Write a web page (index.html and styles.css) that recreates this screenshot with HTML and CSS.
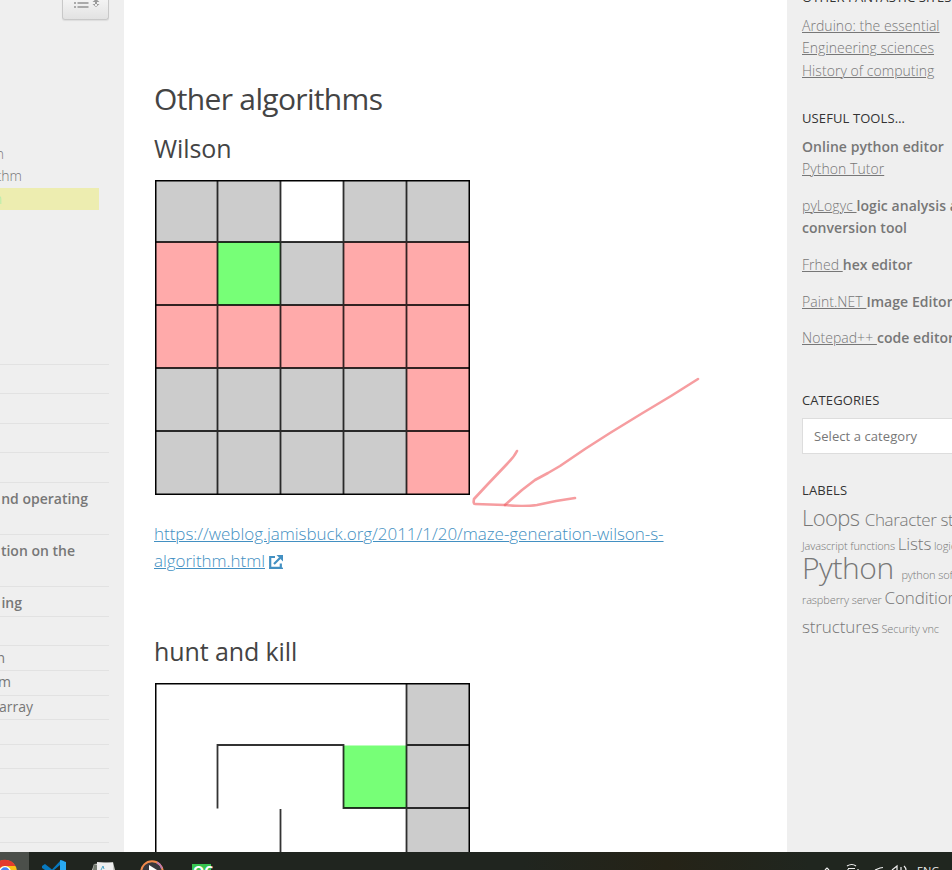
FILE: index.html
```html
<!DOCTYPE html>
<html lang="en">
<head>
<meta charset="utf-8">
<title>Other algorithms</title>
<link rel="stylesheet" href="styles.css">
</head>
<body>
<div class="page">
  <aside class="nav">
    <button class="toggle" aria-label="Toggle list">
      <svg width="46" height="21" viewBox="0 0 46 21"><path d="M11 4h2M11 8h2M14.500 4h11M14.500 8h11" stroke="#aaa" stroke-width="2"/><path d="M33 0l3.500 3h-7zM33 8l3.500-3h-7zM32 0h2v7h-2z" fill="#999"/></svg>
    </button>
    <ul class="toc">
      <li class="toc-a">n</li>
      <li class="toc-b">thm</li>
      <li class="toc-active">n</li>
    </ul>
    <ul class="menu">
      <li class="h29"></li>
      <li class="h30"></li>
      <li class="h29"></li>
      <li class="h30"></li>
      <li class="h52 strong"><span class="w88">nd operating</span></li>
      <li class="h52 strong"><span class="w75">tion on the</span></li>
      <li class="h30 strong"><span class="w22">ing</span></li>
      <li class="h29"></li>
      <li class="h25"><span class="w4">n</span></li>
      <li class="h25 snug"><span class="w11">m</span></li>
      <li class="h24 snug"><span class="w33">array</span></li>
      <li class="h25"></li>
      <li class="h24"></li>
      <li class="h25"></li>
      <li class="h24"></li>
      <li class="h25"></li>
    </ul>
  </aside>

  <main class="content">
    <h2>Other algorithms</h2>
    <h3>Wilson</h3>
    <div class="figure">
      <svg class="maze" width="315" height="315" viewBox="0 0 315 315">
        <path fill="#ccc" d="M0 0h315v315H0z"/>
        <path fill="#fff" d="M125.500 0h63v62h-63z"/>
        <path fill="#faa" d="M0 62h62.500v63H0zM188.500 62H315v253h-63.500v-127H0v-63h188.500z"/>
        <path fill="#7f7" d="M62.500 62h63v63h-63z"/>
        <path class="wall" d="M62.500 0v315M125.500 0v315M188.500 0v315M251.500 0v315M0 62h315M0 125h315M0 188h315M0 251h315"/>
        <path class="frame" d="M.75.75h313.500v313.500H.75z"/>
      </svg>
      <svg class="arrow" width="240" height="140" viewBox="0 0 240 140">
        <path d="M233 12L206 29L176 47L145 66L120 82L95 99L83 106L70 113L57 123L40 138"/>
        <path d="M52 84Q49 90 42 97L22 118L9 132Q8 137 10 137L40 138Q58 140 72 138L91 134L110 131"/>
      </svg>
    </div>
    <p class="source"><a>https://weblog.jamisbuck.org/2011/1/20/maze-generation-wilson-s-<br>algorithm.html</a> <svg class="ext" width="14" height="14" viewBox="0 0 14 14"><path d="M6 2H1.200v10.800h10.600V8.500M5 9l6-6" fill="none" stroke="#4390c2" stroke-width="2.200"/><path d="M7.500 0H14v6.500z" fill="#4390c2"/><path d="M0 13.300h14" stroke="#4390c2" stroke-width="1.400"/></svg></p>
    <h3>hunt and kill</h3>
    <div class="figure">
      <svg class="maze" width="315" height="315" viewBox="0 0 315 315">
        <path fill="#fff" d="M0 0h315v315H0z"/>
        <path fill="#ccc" d="M251.500 0H315v315h-63.500z"/>
        <path fill="#7f7" d="M188.500 62.500h63v62.500h-63z"/>
        <path class="wall" d="M251.500 0v315M251.500 62H315M251.500 125H315M62.500 125.500V62h126v63h63M125.500 126v189"/>
        <path class="frame" d="M.75.75h313.500v313.500H.75z"/>
      </svg>
    </div>
  </main>

  <aside class="side">
    <h4>Other fantastic sites</h4>
    <p class="links"><a>Arduino: the essential</a><br><a>Engineering sciences</a><br><a>History of computing</a></p>
    <h4 class="tools">Useful tools…</h4>
    <p>Online python editor<br><a>Python Tutor</a></p>
    <p><a>pyLogyc </a>logic analysis and<br>conversion tool</p>
    <p><a>Frhed </a>hex editor</p>
    <p><a>Paint.NET </a>Image Editor</p>
    <p><a>Notepad++ </a>code editor</p>
    <h4 class="cats">Categories</h4>
    <div class="select">Select a category</div>
    <h4 class="labels">Labels</h4>
    <div class="tags">
      <div><span class="t22">Loops</span> <span class="t17 wide">Character strings</span></div>
      <div><span>Javascript functions</span> <span class="t17">Lists</span> <span>logic</span></div>
      <div class="big"><span class="t30">Python</span> <span class="soft">python software</span></div>
      <div class="tight"><span>raspberry server</span> <span class="t17">Conditional</span></div>
      <div class="big"><span class="t17">structures</span> <span>Security</span> <span>vnc</span></div>
    </div>
  </aside>
</div>

<footer class="taskbar">
  <svg width="230" height="18" viewBox="0 0 230 18">
    <path fill="#4b4f4a" d="M0 0h29v18H0z"/>
    <circle cx="5" cy="20" r="12" fill="#fbc116"/>
    <path d="M-6 15A12 12 0 0 1 15.500 14H5a6 6 0 0 0-6 4h-5z" fill="#e33b2e"/>
    <circle cx="5" cy="20" r="6" fill="#fff"/><circle cx="5" cy="20" r="4.700" fill="#4285f4"/>
    <path d="M42 14l3-2 7 5.500L61 8l3 1v9H42z" fill="#0879bf"/><path d="M60 8l6 2v8h-6z" fill="#29a9f2"/><path d="M60 13v5h-6zM42 16l3 2h-3z" fill="#20251f"/>
    <path d="M94 12l19-2 2 8H92z" fill="#c8cac6"/><path d="M97 10l16 1v7H97z" fill="#eee"/><path d="M101 18l2-4 1 3" fill="none" stroke="#4ba3c6"/><path d="M94 12l3 1v5h-4z" fill="#747b71"/>
    <circle cx="152" cy="20" r="10.800" fill="#39383e" stroke="#f28a4c" stroke-width="2"/><path d="M157 10.400a10.800 10.800 0 0 1 5 6" fill="none" stroke="#bc7bb0" stroke-width="2"/><path d="M149 13l8 5h-8z" fill="#fff"/>
    <path d="M192 12h19v6h-19z" fill="#38c550"/><text x="193" y="24" class="qc">QC</text>
  </svg>
  <div class="tray">
    <svg width="100" height="18" viewBox="0 0 100 18"><g fill="none" stroke="#eee" stroke-width="1.200"><path d="M15 18l2-2 2 2M37 14q5-3 9 0M38 16.500h7M38 17v1M48 17v1M65 18l5-2 3-.5M82 18l5-4v4M91 15v3M94 14q2 2 2 4"/></g></svg>
    <span>ENG</span>
  </div>
</footer>
</body>
</html>
```

FILE: styles.css
```css
* { box-sizing: border-box; }
html, body { height: 870px; overflow: hidden; }
body { margin: 0; font-family: "Open Sans", "Noto Sans", sans-serif; font-size: 14px; color: #777; background: #fff; }
h2, h3, h4, p, ul { margin: 0; padding: 0; font-weight: 400; }
ul { list-style: none; }
.page { display: grid; grid-template-columns: 124px 663px 165px; height: 852px; overflow: hidden; }

.nav { background: #efefef; overflow: hidden; }
.toggle { display: block; width: 47px; height: 21px; margin: -1px 0 0 62px; padding: 0; border: 1px solid #c8c8c8; border-top: 0; border-radius: 0 0 3px 3px; background: linear-gradient(#f4f4f4, #e2e2e2); box-shadow: 0 1px 1px #ddd; }
.toggle svg { display: block; }
.toc { margin-top: 123px; font-weight: 300; line-height: 22px; }
.toc li { display: flex; justify-content: flex-end; height: 22px; }
.toc-a { width: 4px; }
.toc-b { width: 22px; }
.toc .toc-active { width: 99px; margin-top: 1px; padding-right: 97px; background: #ededb0; color: #a6eda6; }
.menu { width: 109px; margin-top: 154px; border-top: 1px solid #e2e2e2; }
.menu li { border-bottom: 1px solid #e2e2e2; line-height: 22px; padding-top: 1px; }
.menu .strong { font-weight: 600; padding-top: 5px; }
.menu .snug { padding-top: 0; }
.menu span { display: flex; justify-content: flex-end; white-space: nowrap; }
.h24 { height: 24px; }
.h25 { height: 25px; }
.h29 { height: 29px; }
.h30 { height: 30px; }
.h52 { height: 52px; }
.w88 { width: 88px; }
.w75 { width: 75px; }
.w22 { width: 22px; }
.w4 { width: 5px; }
.w11 { width: 11px; }
.w33 { width: 33px; }

.content { padding: 79px 30px 0; color: #444; background: #fff; }
h2 { font-size: 30px; line-height: 40px; letter-spacing: -.66px; }
h3 { font-size: 25px; line-height: 34px; margin-top: 12px; letter-spacing: -.1px; }
.figure { position: relative; width: 315px; height: 315px; margin: 15px 0 0 1px; }
.maze { display: block; }
.wall { fill: none; stroke: #000; stroke-opacity: .8; stroke-width: 1.800; }
.frame { fill: none; stroke: #000; stroke-width: 1.500; }
.arrow { position: absolute; left: 310px; top: 187px; }
.arrow path { fill: none; stroke: #f05b60; stroke-opacity: .6; stroke-width: 2.600; stroke-linecap: round; stroke-linejoin: round; }
.source { margin-top: 25px; font-size: 17px; font-weight: 300; line-height: 27px; letter-spacing: -.035px; color: #4390c2; white-space: nowrap; }
.source a { text-decoration: underline; text-decoration-thickness: 1px; }
.ext { vertical-align: -2px; }
.source + h3 { margin-top: 60px; }

.side { background: #efefef; padding-left: 15px; overflow: hidden; white-space: nowrap; }
.side h4 { font-size: 13px; line-height: 20px; letter-spacing: .1px; color: #333; text-transform: uppercase; }
.side h4:first-child { margin-top: -13px; }
.side p { font-weight: 600; line-height: 22.400px; margin-bottom: 14.300px; letter-spacing: .05px; }
.side a { font-weight: 300; text-decoration: underline; text-decoration-thickness: 1px; }
.side .links { margin: 8px 0 25.800px; }
.side .tools { margin-bottom: 7.800px; }
.side .cats { margin-top: 40.300px; }
.select { height: 36px; width: 180px; margin-top: 8px; padding-left: 11px; border: 1px solid #ddd; background: #fff; font-size: 13px; line-height: 34px; letter-spacing: .07px; }
.side .labels { margin-top: 26px; }
.tags { margin-top: 10px; font-size: 11px; font-weight: 300; line-height: 24px; letter-spacing: -.12px; }
.tags span { line-height: 0; }
.tags .big { margin-top: 5px; }
.tags .tight { margin-top: 1px; }
.t17 { font-size: 17px; }
.t22 { font-size: 22px; letter-spacing: -.6px; }
.t30 { font-size: 30px; letter-spacing: -.45px; }
.wide { margin-left: 2.500px; letter-spacing: -.35px; }
.soft { margin-left: 5px; }

.taskbar { display: flex; justify-content: space-between; height: 18px; overflow: hidden; background: linear-gradient(90deg, #20251f, #20251f 55%, #252317 70%, #20261f 85%); }
.taskbar svg { display: block; }
.qc { font: 700 14px "Open Sans", sans-serif; fill: #fff; }
.tray { display: flex; width: 142px; color: #eee; }
.tray span { margin: 11px 0 0 7px; font-size: 11px; line-height: 15px; }
```
